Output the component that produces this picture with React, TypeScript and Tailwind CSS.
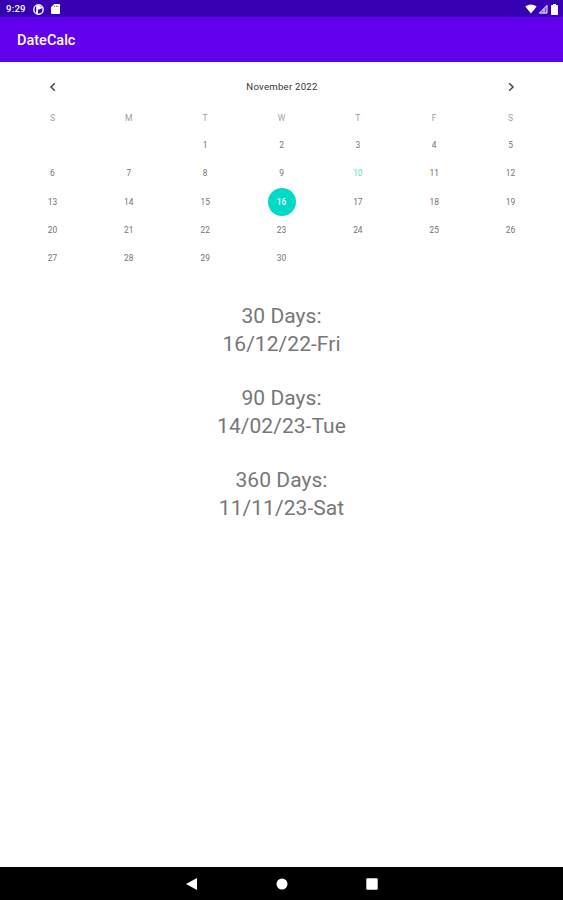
import { useState } from "react";
import clsx from "clsx";

const WEEKDAYS = ["S", "M", "T", "W", "T", "F", "S"];
const FIRST_WEEKDAY = 2;
const DAYS_IN_MONTH = 30;
const TODAY = 10;

const RESULTS = [
  { label: "30 Days:", date: "16/12/22-Fri" },
  { label: "90 Days:", date: "14/02/23-Tue" },
  { label: "360 Days:", date: "11/11/23-Sat" },
];

function StatusBar() {
  return (
    <div className="flex h-[17px] shrink-0 items-center bg-[#3700b3] pl-[6px] pr-[5px] pt-px text-white">
      <span className="w-[27px] text-[9.6px] font-medium leading-none tracking-[0.2px]">
        9:29
      </span>
      <svg className="h-[11px] w-[11px]" viewBox="0 0 11 11">
        <circle cx="5.5" cy="5.5" r="4.7" fill="none" stroke="white" strokeWidth="1.4" />
        <path d="M3.2 1.6H6a2 2 0 0 1 0 4H5v3.8H3.2z" fill="white" />
        <path d="M6.2 3.1h3v1.4h-3z" fill="white" />
      </svg>
      <svg className="ml-[7px] h-[10px] w-[9px]" viewBox="0 0 9 10">
        <path
          fill="white"
          fillRule="evenodd"
          d="M3.2 0H8q1 0 1 1v8q0 1-1 1H1q-1 0-1-1V3.2zM3.4 1.7v1.3h.6V1.7zm1.6 0v1.3h.6V1.7zm1.6 0v1.3h.6V1.7z"
        />
      </svg>
      <svg className="ml-auto h-[10px] w-[12px]" viewBox="0 0 12 10">
        <path d="M0.3 2.6Q6-1.8 11.7 2.6L6 9.6z" fill="white" />
      </svg>
      <svg className="ml-px h-[10px] w-[10px]" viewBox="0 0 10 10">
        <path d="M.6 9.4L9.4.6v8.8z" fill="white" fillOpacity="0.35" />
        <path d="M1.4 9.1L9 1.4v7.7zM6 4.6v4.5" fill="none" stroke="white" strokeOpacity="0.8" />
      </svg>
      <svg className="ml-[3px] h-[11px] w-[7px]" viewBox="0 0 7 11">
        <path d="M2 0h3v1h1.2q.8 0 .8.8v8.4q0 .8-.8.8H.8q-.8 0-.8-.8V1.8Q0 1 .8 1H2z" fill="white" />
      </svg>
    </div>
  );
}

function Calendar() {
  const [selected, setSelected] = useState(16);
  const days = Array.from({ length: DAYS_IN_MONTH }, (_, i) => i + 1);

  return (
    <section className="px-[14.3px] pt-[14px]">
      <div className="flex h-[21px] items-center justify-between pl-[33.5px] pr-[32.5px]">
        <button type="button" aria-label="Previous month">
          <svg className="h-[10px] w-[10px]" viewBox="0 0 10 10">
            <path d="M6.8 1.2L3 5l3.8 3.8" fill="none" stroke="#444" strokeWidth="1.5" />
          </svg>
        </button>
        <h2 className="text-[9.6px] leading-none tracking-[0.25px] text-[#333]">
          November 2022
        </h2>
        <button type="button" aria-label="Next month">
          <svg className="h-[10px] w-[10px]" viewBox="0 0 10 10">
            <path d="M3.2 1.2L7 5 3.2 8.8" fill="none" stroke="#444" strokeWidth="1.5" />
          </svg>
        </button>
      </div>

      <div className="mt-[10px] grid h-[23px] grid-cols-7 place-items-center text-[8.5px] text-[#a0a0a0]">
        {WEEKDAYS.map((day, index) => (
          <span key={`${day}-${index}`}>{day}</span>
        ))}
      </div>

      <div className="mt-[1.5px] grid auto-rows-[28.1px] grid-cols-7 place-items-center text-[8.4px] text-[#737373]">
        {Array.from({ length: FIRST_WEEKDAY }, (_, i) => (
          <span key={`empty-${i}`} />
        ))}
        {days.map((day) => (
          <button
            key={day}
            type="button"
            onClick={() => setSelected(day)}
            className={clsx(
              "flex size-7 items-center justify-center rounded-full leading-none",
              day === selected && "bg-[#03dac5] font-medium text-white",
              day === TODAY && day !== selected && "text-[#50e3b8]",
            )}
          >
            {day}
          </button>
        ))}
      </div>
    </section>
  );
}

function NavigationBar() {
  return (
    <nav className="flex h-[33px] shrink-0 items-center justify-center gap-[78px] bg-black">
      <svg className="h-3 w-3" viewBox="0 0 12 12">
        <path d="M0 6L11 0v12z" fill="white" />
      </svg>
      <svg className="h-3 w-3" viewBox="0 0 12 12">
        <circle cx="6" cy="6" r="5.5" fill="white" />
      </svg>
      <svg className="h-3 w-3" viewBox="0 0 12 12">
        <rect x="0.3" y="0.3" width="11.4" height="11.4" rx="0.8" fill="white" />
      </svg>
    </nav>
  );
}

export default function App() {
  return (
    <div className="flex h-screen flex-col bg-white font-['Roboto',sans-serif]">
      <StatusBar />
      <header className="flex h-[45px] shrink-0 items-center bg-[#6200ee] pl-[17px] pt-[4px]">
        <h1 className="text-[14.5px] font-medium leading-none text-white">DateCalc</h1>
      </header>

      <main className="flex-1">
        <Calendar />
        <div className="mt-[30px] flex flex-col gap-[25px] text-center text-[21px] leading-[28.5px] tracking-[0.05px] text-[#777]">
          {RESULTS.map(({ label, date }) => (
            <div key={label}>
              <p>{label}</p>
              <p>{date}</p>
            </div>
          ))}
        </div>
      </main>

      <NavigationBar />
    </div>
  );
}
